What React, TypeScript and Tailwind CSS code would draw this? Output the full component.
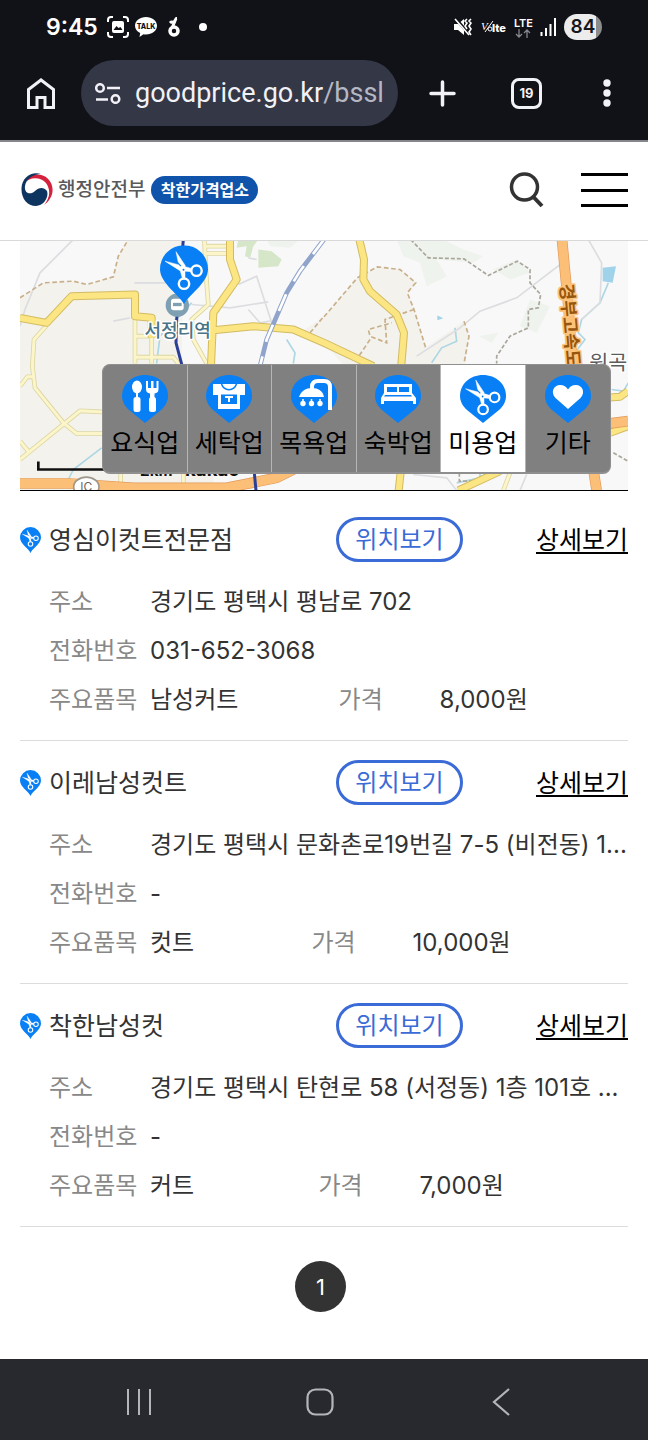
import type { ReactNode } from 'react'

type Shop = { name: string; address: string; phone: string; item: string; price: string }

const SHOPS: Shop[] = [
  { name: '영심이컷트전문점', address: '경기도 평택시 평남로 702', phone: '031-652-3068', item: '남성커트', price: '8,000원' },
  { name: '이레남성컷트', address: '경기도 평택시 문화촌로19번길 7-5 (비전동) 1...', phone: '-', item: '컷트', price: '10,000원' },
  { name: '착한남성컷', address: '경기도 평택시 탄현로 58 (서정동) 1층 101호 ...', phone: '-', item: '커트', price: '7,000원' },
]

function ScissorsGlyph() {
  return (
    <g fill="none" stroke="#fff">
      <path d="M5 16 22 20.500 32 23.500 31 26.500 20 25.500Z" fill="#fff" strokeWidth="0.500" />
      <path d="M16 6.500 25 20 25 33.500 22.500 33.500 19.500 23Z" fill="#fff" strokeWidth="0.500" />
      <circle cx="36.500" cy="25.500" r="5.200" strokeWidth="2.400" />
      <circle cx="24" cy="38.500" r="5.200" strokeWidth="2.400" />
      <path d="m17 17 4 4" stroke="#087ff5" strokeWidth="1.200" />
      <circle cx="23.500" cy="24.500" r="1" fill="#087ff5" stroke="none" />
    </g>
  )
}

// 지도 마커 / 목록 아이콘
function ShopPin({ className }: { className?: string }) {
  return (
    <svg viewBox="0 0 48 59" className={className} aria-hidden="true">
      <path d="M24 59C20 50 0 38 0 24a24 24 0 0 1 48 0c0 14-20 26-24 35Z" fill="#087ff5" />
      <ScissorsGlyph />
    </svg>
  )
}

function CategoryPin({ children }: { children: ReactNode }) {
  return (
    <svg viewBox="0 0 46 48" className="h-12 w-[46px]" aria-hidden="true">
      <path d="M23 48 7 35C2.500 31 0 26 0 21 0 9 10 0 23 0s23 9 23 21c0 5-2.500 10-7 14Z" fill="#087ff5" />
      {children}
    </svg>
  )
}

const CATEGORIES: { label: string; active?: boolean; glyph: ReactNode }[] = [
  {
    label: '요식업',
    glyph: (
      <g fill="#fff">
        <ellipse cx="15" cy="12" rx="5" ry="6.500" />
        <path d="M14 17h2v6h-2z" />
        <rect x="11.500" y="22" width="7" height="15" rx="2.500" />
        <path d="M24 6h2v7h3V6h2.500v7h3V6h2v8c0 3-1.500 4-4 4.500V23h-4.500v-4.500C25.500 18 24 17 24 14Z" />
        <rect x="27" y="22" width="7" height="15" rx="2.500" />
      </g>
    ),
  },
  {
    label: '세탁업',
    glyph: (
      <g>
        <path d="M7 9h32v11h-5v14H12V20H7Z" fill="#fff" />
        <path d="M15.500 9c2.500 7.500 12.500 7.500 15 0" fill="none" stroke="#087ff5" strokeWidth="1.500" />
        <path d="M15 19.500h16V29H15Z" fill="#087ff5" />
        <path d="M19 22h8M23 22v5" stroke="#fff" strokeWidth="2" />
      </g>
    ),
  },
  {
    label: '목욕업',
    glyph: (
      <g>
        <path d="M21 15V12c0-4 2-6 6-6h6c4 0 6 2 6 6v23" fill="none" stroke="#fff" strokeWidth="4" />
        <path d="M8 22c2-6 7-9 13-9s11 3 12 9Z" fill="#fff" />
        <path d="M12 24v4M20.500 24v4M29 24v4" stroke="#fff" strokeWidth="1.500" />
        <circle cx="12" cy="28.500" r="2.700" fill="#fff" />
        <circle cx="20.500" cy="28.500" r="2.700" fill="#fff" />
        <circle cx="29" cy="28.500" r="2.700" fill="#fff" />
      </g>
    ),
  },
  {
    label: '숙박업',
    glyph: (
      <g fill="#fff">
        <path d="M9 9h28v9l4 5v6h-3v-3H9v3H6v-6l3-5Z" />
        <path d="M12 12h10v5H12ZM24 12h10v5H24ZM10 20h26l1 1.500H9Z" fill="#087ff5" />
      </g>
    ),
  },
  {
    label: '미용업',
    active: true,
    glyph: (
      <g transform="translate(1 -1) scale(0.920)">
        <ScissorsGlyph />
      </g>
    ),
  },
  {
    label: '기타',
    glyph: <path d="M23 34 10.500 23C5 17 9 10 15 10c4 0 6.500 2 8 4.500C24.500 12 27 10 31 10c6 0 10 7 4.500 13Z" fill="#fff" />,
  },
]

function StatusBar() {
  return (
    <div className="flex h-[54px] items-center justify-between px-[46px]">
      <div className="flex items-center">
        <span className="text-[23px] leading-8 font-semibold">9:45</span>
        <svg viewBox="0 0 22 22" className="ml-[9px] h-[22px] w-[22px]" fill="none" stroke="#fff" strokeWidth="2">
          <path d="M1 6V4a3 3 0 0 1 3-3h2M16 1h2a3 3 0 0 1 3 3v2M21 16v2a3 3 0 0 1-3 3h-2M6 21H4a3 3 0 0 1-3-3v-2" />
          <rect x="5" y="5" width="12" height="12" rx="2" fill="#fff" stroke="none" />
          <path d="m6.500 14 3-4 2 2 2-1 2 3Z" fill="#111217" stroke="none" />
        </svg>
        <svg viewBox="0 0 22 20" className="ml-[6px] h-5 w-[22px]">
          <path d="M11 0c6 0 11 3.800 11 8.700s-5 8.700-11 8.700c-1 0-2 0-2.500-.200L4.500 20l.700-4C2 14.500 0 12 0 8.700 0 3.800 5 0 11 0Z" fill="#fff" />
          <text x="11" y="11.500" textAnchor="middle" fontSize="7" fontWeight="800" fill="#111217">TALK</text>
        </svg>
        <svg viewBox="0 0 12 20" className="ml-[11px] h-5 w-3" fill="none" stroke="#fff">
          <circle cx="6" cy="14" r="4" strokeWidth="3.500" />
          <path d="M2 6c2-2 3 0 4-1s2-4 3-4M4 11l3-7" strokeWidth="3" />
        </svg>
        <span className="ml-[19px] h-2 w-2 rounded-full bg-white" />
      </div>
      <div className="flex items-center gap-[7px]">
        <svg viewBox="0 0 20 18" className="h-[18px] w-5">
          <path d="M0 6h4l6-5v16l-6-5H0Z" fill="#fff" />
          <path d="m2 1 14 16" stroke="#111217" strokeWidth="3" />
          <path d="m1 1 14 16M13 1l-2 2 2 2-2 3 2 3M17 1l-2 2 2 2-2 3 2 3-2 3 2 3" fill="none" stroke="#fff" strokeWidth="1.600" />
        </svg>
        <svg viewBox="0 0 26 14" className="h-[14px] w-[26px]">
          <text x="0" y="10" fontSize="11" fontStyle="italic" fill="#fff" fontFamily="Liberation Serif, serif">V</text>
          <path d="M4 12 12 1" stroke="#fff" />
          <circle cx="9" cy="9" r="2" fill="none" stroke="#fff" />
          <text x="11" y="12" fontSize="11" fontWeight="800" fill="#fff">lte</text>
        </svg>
        <div className="flex flex-col items-center">
          <span className="text-[11px] leading-[12px] font-semibold">LTE</span>
          <svg viewBox="0 0 16 9" className="h-[9px] w-4" fill="none" stroke="#85868b" strokeWidth="1.300">
            <path d="M4 0v8M1 5l3 3 3-3M12 9V1M9 4l3-3 3 3" />
          </svg>
        </div>
        <svg viewBox="0 0 17 18" className="h-[18px] w-[17px]" stroke="#fff" strokeWidth="2">
          <path d="M1.500 14v4M6 10v8M10.500 6v12M15 0v18" />
        </svg>
        <div className="flex h-[26px] w-[38px] items-center justify-center rounded-full bg-linear-to-r from-[#ececec] from-83% to-[#8c8c8c] to-83% text-[19px] leading-6 font-semibold text-[#16171b]">
          84
        </div>
      </div>
    </div>
  )
}

function BrowserBar() {
  return (
    <div className="flex h-[86px] items-center pr-9 pb-2 pl-[27px] text-[#f1f1f6]">
      <button aria-label="홈">
        <svg viewBox="0 0 28 31" className="h-[31px] w-7" fill="none" stroke="currentColor" strokeWidth="3">
          <path d="M1.500 29.500V11.500L14 2l12.500 9.500v18H18v-10h-8v10Z" />
        </svg>
      </button>
      <div className="ml-[26px] flex h-[66px] min-w-0 flex-1 items-center rounded-full bg-[#343746] pr-[13px] pl-[14px]">
        <button aria-label="사이트 정보">
          <svg viewBox="0 0 26 21" className="h-[21px] w-[26px]" fill="none" stroke="currentColor" strokeWidth="2.500">
            <circle cx="5" cy="5" r="3.800" />
            <path d="M12 5h13M1 16.500h12" />
            <circle cx="20.500" cy="16" r="3.800" />
          </svg>
        </button>
        <button className="ml-[14px] min-w-0 flex-1 overflow-hidden text-left font-[Roboto,sans-serif] text-[27px] leading-9 whitespace-nowrap">
          goodprice.go.kr<span className="text-[#b5b7c4]">/bssl</span>
        </button>
      </div>
      <button aria-label="새 탭" className="ml-[31px]">
        <svg viewBox="0 0 27 27" className="h-[27px] w-[27px]" stroke="currentColor" strokeWidth="3.500" strokeLinecap="round">
          <path d="M2 13.500h23M13.500 2v23" />
        </svg>
      </button>
      <button aria-label="열린 탭" className="ml-[55px] flex h-[31px] w-[31px] items-center justify-center rounded-lg border-3 border-current text-[13px] leading-4 font-bold">
        19
      </button>
      <button aria-label="메뉴" className="ml-[60px]">
        <svg viewBox="0 0 10 28" className="h-7 w-[10px]" fill="currentColor">
          <circle cx="5" cy="4" r="3.700" />
          <circle cx="5" cy="14" r="3.700" />
          <circle cx="5" cy="24" r="3.700" />
        </svg>
      </button>
    </div>
  )
}

function SiteHeader() {
  return (
    <header className="flex h-[99px] items-center justify-between border-b border-[#d9d9d9] bg-white px-5 pb-[2px]">
      <a href="#" className="flex items-center">
        <svg viewBox="0 0 34 34" className="h-[34px] w-[34px]" aria-hidden="true">
          <path d="M3 11C8-1 25-2 31 10c4 9 0 17-7 22 6-7 7-15 2-22-5-6-16-7-23 1Z" fill="#d5213c" />
          <path d="M1.500 15C2 4 12-2 21 1 13 1 6 6 5 13c-1 8 6 9 10 5s9-4 12 0c2 6-3 15-11 15C7 33 1 25 1.500 15Z" fill="#0e3560" />
        </svg>
        <span className="ml-1 text-[19px] leading-7 font-medium text-[#58595b]">행정안전부</span>
        <span className="ml-[6px] flex h-7 w-[107px] items-center justify-center rounded-full bg-[#1053ab] text-[16px] leading-5 font-bold text-white">착한가격업소</span>
      </a>
      <div className="flex items-center">
        <button aria-label="검색">
          <svg viewBox="0 0 36 36" className="h-9 w-9" fill="none" stroke="#333" strokeWidth="3.500">
            <circle cx="15.500" cy="15" r="13" />
            <path d="m24.500 25 8.500 9" strokeWidth="4" />
          </svg>
        </button>
        <button aria-label="전체메뉴" className="ml-9 flex h-[34px] w-[47px] flex-col justify-between">
          <span className="h-[3px] w-full bg-black" />
          <span className="h-[3px] w-full bg-black" />
          <span className="h-[3px] w-full bg-black" />
        </button>
      </div>
    </header>
  )
}

const LANES = 'M140 258 102 300 97 380 105 445 190 550 230 582H320M60 660 240 514 320 518M60 440 82 412H100M60 605 85 635M405 235V372M455 285V372M405 290H460M405 353H520L535 372M613 0 620 130 625 195 575 240 580 300 620 372M615 20H680M620 42H680M362 700V753M550 700V753M1530 700l-20 53'
const ROADS = 'M60 235 140 250 215 170 405 165V230L455 235V295M690 0V60L710 120 640 220 632 400M640 272 760 260 880 270 972 310 1120 380M1078 0 1092 60 1090 120 1110 155 1190 225 1212 280 1202 400M1203 690 1196 753M1375 753 1500 695M1820 475 1860 472 1884 455M1830 580 1884 560'
const HIGHWAYS = 'M1686 0 1705 200 1720 400 1780 690 1790 753M60 732 210 732 400 745H680L830 715 880 690M1820 553 1884 545'
const RAILWAY = 'M972 0 900 95 860 160 800 300 775 400'

function MapCanvas() {
  return (
    <svg viewBox="60 3 1824 750" preserveAspectRatio="xMidYMid slice" className="h-full w-full" fill="none" role="img" aria-label="지도">
      <rect x="60" y="3" width="1824" height="750" fill="#f8f8f8" />
      <path d="M60 175 130 130 220 125 260 135 340 112 355 50 385 0H550L545 372 640 372V753H60Z" fill="#f3f2ed" />
      <path d="M972 232 1072 115 1132 82 1200 90 1247 130 1222 160 1242 210 1277 325 1392 245 1407 290 1392 400H1050L972 310 900 280Z" fill="#f3f2ed" />
      {/* 녹지 */}
      <path d="M715 0h60l-15 20-10 35-15-5 5-30-30 5ZM775 30l40 5 30 25-10 20-60 5Z" fill="#d5e6c9" />
      <path d="M800 0h100l-30 25-60-5ZM1190 0h140l60 30 60 20-30 20-110-10 30 50-60 30-20-70-50-20ZM1480 90l70-30 40 40-60 20ZM1590 180l60 20-40 80-50-20ZM1435 290l60-10-20 30Z" fill="#eff3ed" />
      <path d="M1808 85l40-5-10 50-30-5ZM1312 228l18 8-18 6Z" fill="#a0d3ea" />
      {/* 하천 */}
      <path d="M575 190 480 290 470 372M305 625 220 690 205 720M1825 130 1800 190 1745 240 1735 280 1755 300 1700 372M1365 265l5 40-45 20-30 45M860 300l25 40-5 32M1835 450l35 5 15-25M1440 700v15l-70 15" stroke="#add7e4" strokeWidth="5" />
      {/* 골목길 */}
      <path d="M220 0 120 100 75 210 60 260M403 130H530M340 245l50-10M575 195 690 205 805 187M715 135 770 110 815 250M745 55 770 60M745 210l35 40 30-5M1250 350 1380 265 1440 215 1550 175 1700 60M1765 0 1805 70 1800 190 1745 240M1240 705l100 10 30 38M1580 705l-20 48" stroke="#dcdde0" strokeWidth="5" />
      <path d="M60 175 130 130 220 125 260 135 340 112 355 50 385 0M972 232 1072 115 1132 82 1200 90 1247 130 1222 160 1242 210 1277 325M930 280 972 230M1392 245 1407 290 1392 372M1242 210 1155 240 1160 310 1110 290 1105 270 1175 250M1110 300 1070 360" stroke="#c9b08a" strokeWidth="5" strokeDasharray="14 8" />
      <path d="M1232 0 1285 55 1392 58 1465 108 1552 65 1590 90 1590 130 1622 165 1615 205 1585 210 1585 265 1530 290 1490 350 1490 372M1840 640 1884 665M1378 700v25h60" stroke="#aaa69b" strokeWidth="5" strokeDasharray="12 6" />
      {/* 도로 */}
      <g strokeLinejoin="round">
        <path d={LANES} stroke="#dcd6a4" strokeWidth="14" />
        <path d={LANES} stroke="#fbf5c9" strokeWidth="9" />
        <path d={ROADS} stroke="#d3bb62" strokeWidth="24" />
        <path d={ROADS} stroke="#fbe683" strokeWidth="18" />
        <path d={HIGHWAYS} stroke="#e0995a" strokeWidth="32" />
        <path d={HIGHWAYS} stroke="#fcbf78" strokeWidth="28" />
      </g>
      {/* 철도 */}
      <path d={RAILWAY} stroke="#8fa3cb" strokeWidth="14" />
      <path d={RAILWAY} stroke="#fff" strokeWidth="8" strokeDasharray="55 45" />
      <path d="M550 0 530 240 528 310 548 385M762 690 768 753" stroke="#2c3f96" strokeWidth="9" />
      <ellipse cx="259" cy="742" rx="38" ry="29" fill="#fff" stroke="#a0988c" strokeWidth="5" />
      <text x="259" y="754" textAnchor="middle" fontSize="36" fill="#6b645c">IC</text>
      {/* 역 표시 */}
      <circle cx="532" cy="197" r="35" fill="#7fa0b2" />
      <rect x="513" y="178" width="38" height="34" rx="8" fill="#fff" />
      <path d="M519 190h26v10h-26z" fill="#7fa0b2" />
      <g strokeLinejoin="round" style={{ paintOrder: 'stroke' }}>
        <text x="533" y="291" textAnchor="middle" fontSize="54" fontWeight="500" fill="#4a7386" stroke="#fff" strokeWidth="9">서정리역</text>
        <text x="1768" y="390" fontSize="62" fill="#5c5c5c" stroke="#fff" strokeWidth="8">원곡</text>
        <text transform="translate(1680 134) rotate(85)" fontSize="54" fontWeight="700" fill="#97560f" stroke="#fdc47c" strokeWidth="10">경부고속도</text>
      </g>
      {/* 축척 */}
      <path d="M115 666V690H760" stroke="#111" strokeWidth="8" />
      <text x="420" y="708" fontSize="46" fontWeight="700" fill="#111">2km</text>
      <text x="555" y="708" fontSize="56" fontWeight="700" fill="#111">kakao</text>
      <svg x="480" y="17" width="144" height="177" viewBox="0 0 48 59">
        <ShopPin />
      </svg>
    </svg>
  )
}

function CategoryTabs() {
  return (
    <ul className="absolute right-[17px] bottom-4 grid h-[110px] w-[509px] grid-cols-6 overflow-hidden rounded-lg border border-b-2 border-[#8f8f8f] bg-[#808080]">
      {CATEGORIES.map(c => (
        <li key={c.label} className="border-r border-[#b5b5b5] last:border-r-0">
          <button className={`flex h-full w-full flex-col items-center pt-[10px] text-black ${c.active ? 'bg-white' : ''}`}>
            <CategoryPin>{c.glyph}</CategoryPin>
            <span className="mt-1 text-[25px] leading-8">{c.label}</span>
          </button>
        </li>
      ))}
    </ul>
  )
}

function ShopRow({ shop }: { shop: Shop }) {
  return (
    <li className="border-b border-[#dcdcdc] pt-[19px] pb-4">
      <div className="flex items-center">
        <ShopPin className="h-[26px] w-[21px] shrink-0" />
        <h2 className="ml-2 min-w-0 flex-1 truncate text-[25px] leading-9 text-[#333]">{shop.name}</h2>
        <button className="h-[45px] w-[127px] shrink-0 rounded-full border-3 border-[#3b6bd6] text-[24px] leading-8 text-[#3b6bd6]">위치보기</button>
        <a href="#" className="ml-[73px] shrink-0 text-[25px] leading-9 text-black underline decoration-2 underline-offset-3">상세보기</a>
      </div>
      <dl className="mt-[15px] ml-[29px] text-[24px] leading-[49px] text-[#333]">
        <div className="flex">
          <dt className="w-[101px] shrink-0 text-[#888]">주소</dt>
          <dd className="whitespace-nowrap">{shop.address}</dd>
        </div>
        <div className="flex">
          <dt className="w-[101px] shrink-0 text-[#888]">전화번호</dt>
          <dd>{shop.phone}</dd>
        </div>
        <div className="flex">
          <dt className="w-[101px] shrink-0 text-[#888]">주요품목</dt>
          <dd className="flex-auto">{shop.item}</dd>
          <dt className="w-[101px] shrink-0 text-[#888]">가격</dt>
          <dd className="flex-auto">{shop.price}</dd>
        </div>
      </dl>
    </li>
  )
}

function SystemNav() {
  return (
    <nav className="grid h-[81px] grid-cols-3 place-items-center bg-[#28292e] pt-[5px] pr-14 pl-12">
      <button aria-label="최근 앱">
        <svg viewBox="0 0 26 28" className="h-7 w-[26px]" stroke="#b4b5b9" strokeWidth="2">
          <path d="M2 1v26M13 1v26M24 1v26" />
        </svg>
      </button>
      <button aria-label="홈 화면">
        <svg viewBox="0 0 28 28" className="h-7 w-7" fill="none" stroke="#b4b5b9" strokeWidth="2.200">
          <rect x="1.500" y="1.500" width="25" height="25" rx="8" />
        </svg>
      </button>
      <button aria-label="뒤로">
        <svg viewBox="0 0 18 28" className="h-7 w-[18px]" fill="none" stroke="#b4b5b9" strokeWidth="2.200">
          <path d="M17 1 2 14l15 13" />
        </svg>
      </button>
    </nav>
  )
}

export default function App() {
  return (
    <div className="flex min-h-screen flex-col bg-white font-[Inter,'Noto_Sans_CJK_KR',sans-serif]">
      <div className="border-b-2 border-[#85868c] bg-[#111217] text-white">
        <StatusBar />
        <BrowserBar />
      </div>
      <SiteHeader />
      <main className="flex-1 px-5">
        <div className="relative h-[250px] border-b border-black">
          <MapCanvas />
          <CategoryTabs />
        </div>
        <ul className="mt-[7px]">
          {SHOPS.map(s => <ShopRow key={s.name} shop={s} />)}
        </ul>
        <div className="mt-[34px] flex justify-center pr-[7px] pb-[47px]">
          <button aria-current="page" className="h-[51px] w-[51px] rounded-full bg-[#333] text-[22px] leading-8 text-white">1</button>
        </div>
      </main>
      <SystemNav />
    </div>
  )
}
